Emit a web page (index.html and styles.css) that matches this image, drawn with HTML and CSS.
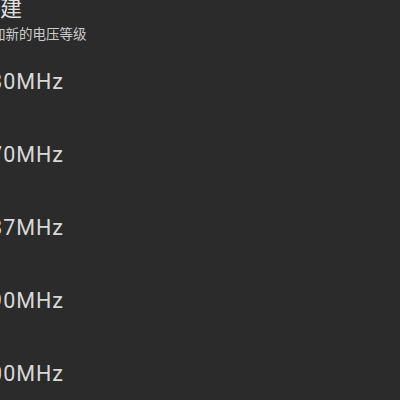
FILE: index.html
```html
<!DOCTYPE html>
<html lang="zh">
<head>
<meta charset="utf-8">
<link rel="stylesheet" href="styles.css">
</head>
<body>
<div class="page">
  <div class="header">
    <div class="title">新建</div>
    <div class="subtitle">添加新的电压等级</div>
  </div>
  <ul class="list">
    <li class="item">180MHz</li>
    <li class="item">270MHz</li>
    <li class="item">387MHz</li>
    <li class="item">490MHz</li>
    <li class="item">600MHz</li>
  </ul>
</div>
</body>
</html>
```

FILE: styles.css
```css
html, body {
  margin: 0;
  padding: 0;
  background: #2b2b2b;
  overflow: hidden;
}
.page {
  width: 420px;
  height: 400px;
  display: flex;
  flex-direction: column;
  font-family: Roboto, "Noto Sans CJK SC", sans-serif;
}
.header {
  display: flex;
  flex-direction: column;
  margin-left: -20px;
  margin-top: -4px;
}
.title {
  font-size: 22px;
  line-height: 26px;
  margin-left: -2px;
  color: #e2e2e2;
}
.subtitle {
  font-size: 13.5px;
  line-height: 18px;
  margin-left: -1.5px;
  color: #cccccc;
  margin-top: 3px;
}
.list {
  list-style: none;
  margin: 2px 0 0 -23px;
  padding: 0;
  display: flex;
  flex-direction: column;
}
.item {
  height: 73px;
  display: flex;
  align-items: center;
  font-size: 21.5px;
  letter-spacing: 1px;
  color: #d8d8d8;
}
```
